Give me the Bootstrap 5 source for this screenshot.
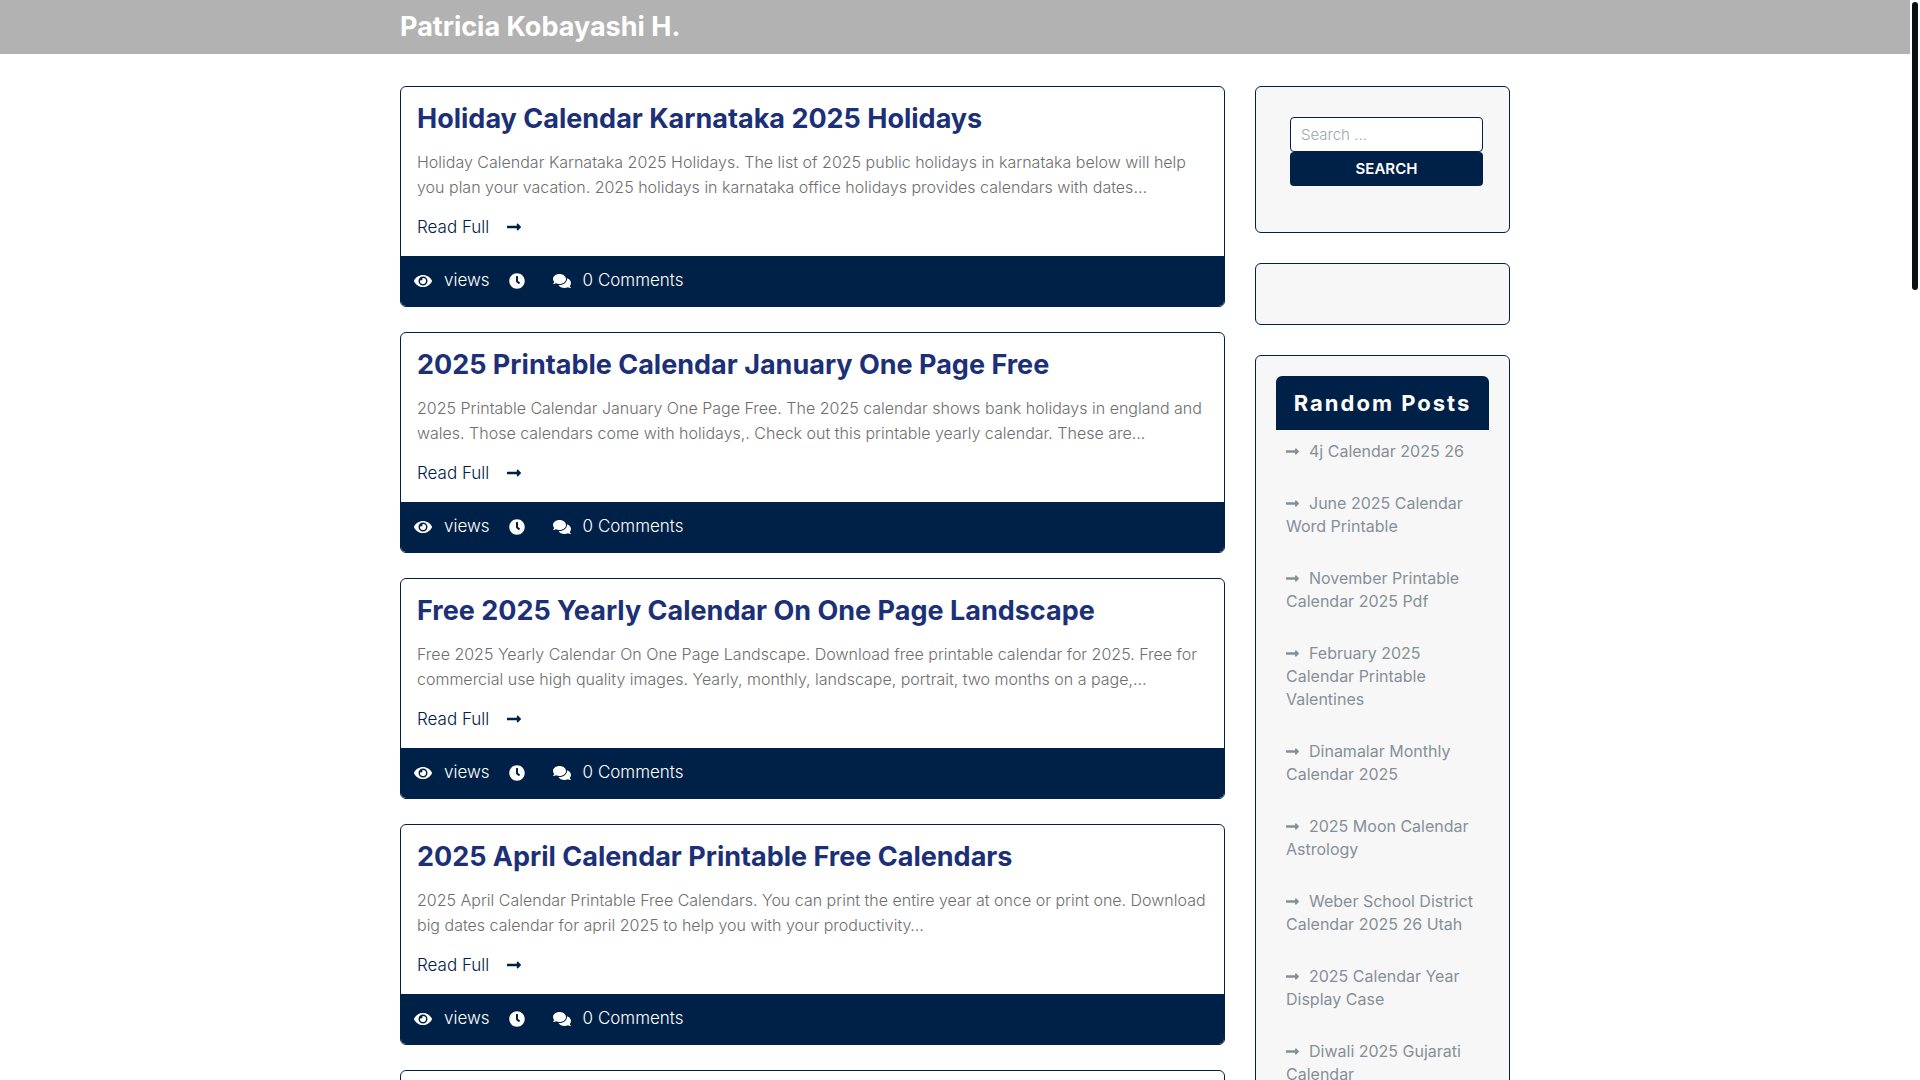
<!DOCTYPE html>
<html lang="en">
<head>
<meta charset="utf-8">
<meta name="viewport" content="width=device-width, initial-scale=1">
<title>Patricia Kobayashi H.</title>
<link href="https://cdn.jsdelivr.net/npm/bootstrap@5.3.0/dist/css/bootstrap.min.css" rel="stylesheet">
<style>
  :root { --navy: #002147; }
  body { font-family: Inter, "Open Sans", sans-serif; overflow: hidden; height: 100vh; padding-right: 10px; color: #6e6e6e; background: #fff; }
  .site-wrap { max-width: 1140px; --bs-gutter-x: 30px; }
  .site-wrap .row { --bs-gutter-x: 30px; }
  .site-head { background: #b2b2b2; }
  .site-title { font-size: 27px; line-height: 30px; font-weight: 700; padding: 12px 0; }
  .content-area { padding-top: 32px; }
  .post { border: 1px solid var(--navy); border-radius: 6px; margin-bottom: 25px; overflow: hidden; }
  .post-main { padding: 17px 16px 15px; }
  .post h2 { font-size: 27px; line-height: 30px; font-weight: 700; margin-bottom: 16px; }
  .post h2 a { color: #1c3078; }
  .post p { font-size: 16px; line-height: 25px; font-weight: 300; margin-bottom: 13px; }
  .read-full { color: var(--navy); font-size: 17px; line-height: 28px; font-weight: 300; gap: 18px; }
  .post-meta { background: var(--navy); color: #fff; font-size: 17px; font-weight: 300; height: 50px; padding: 0 13px 1px; gap: 19px; }
  .post-meta span { gap: 12px; }
  .post-meta .when { margin-right: 9px; }
  .ico { height: 16px; fill: currentColor; flex: none; }
  .side-box { border: 1px solid var(--navy); border-radius: 6px; background: #f7f7f7; margin-bottom: 30px; padding: 20px; }
  .search-form { padding: 10px 6px 26px 14px; }
  .search-form .form-control { border: 1px solid var(--navy); border-radius: 4px; height: 35px; padding: 0 10px; font-size: 15px; font-weight: 300; }
  .search-form .form-control::placeholder { color: #9aa8aa; }
  .search-form .btn { background: var(--navy); color: #fff; border: 0; border-radius: 4px; height: 34px; padding: 0; font-size: 15px; font-weight: 600; }
  .side-title { background: var(--navy); color: #fff; border-radius: 6px 6px 0 0; font-size: 22px; line-height: 24px; font-weight: 700; letter-spacing: 2px; padding: 15px 0; margin: 0; white-space: nowrap; }
  .side-list { padding: 10px; }
  .side-list li { margin-bottom: 29px; font-size: 16px; line-height: 23px; font-weight: 400; }
  .side-list a { color: #868f97; }
  .side-list .ico { height: 15px; margin-right: 10px; vertical-align: -2px; }
  .scroll-rail { width: 10px; background: #fff; padding: 2px; }
  .scroll-thumb { background: #0d1012; border-radius: 3px; height: 288px; }
</style>
<script src="https://cdn.jsdelivr.net/npm/bootstrap@5.3.0/dist/js/bootstrap.bundle.min.js"></script>
</head>
<body>
<svg class="d-none" aria-hidden="true">
  <symbol id="arrow" viewBox="0 0 448 512"><path d="M313.941 216H12c-6.627 0-12 5.373-12 12v56c0 6.627 5.373 12 12 12h301.941v46.059c0 21.382 25.851 32.09 40.971 16.971l86.059-86.059c9.373-9.373 9.373-24.569 0-33.941l-86.059-86.059c-15.119-15.119-40.971-4.411-40.971 16.971V216z"/></symbol>
  <symbol id="eye" viewBox="0 0 576 512"><path d="M572.52 241.4C518.29 135.59 410.93 64 288 64S57.68 135.64 3.48 241.41a32.35 32.35 0 0 0 0 29.19C57.71 376.41 165.07 448 288 448s230.32-71.64 284.52-177.41a32.35 32.35 0 0 0 0-29.19zM288 400a144 144 0 1 1 144-144 143.93 143.93 0 0 1-144 144zm0-240a95.31 95.31 0 0 0-25.31 3.79 47.85 47.85 0 0 1-66.9 66.9A95.78 95.78 0 1 0 288 160z"/></symbol>
  <symbol id="clock" viewBox="0 0 512 512"><path d="M256,8C119,8,8,119,8,256S119,504,256,504,504,393,504,256,393,8,256,8Zm92.49,313h0l-20,25a16,16,0,0,1-22.49,2.5h0l-67-49.72a40,40,0,0,1-15-31.23V112a16,16,0,0,1,16-16h32a16,16,0,0,1,16,16V256l58,42.5A16,16,0,0,1,348.49,321Z"/></symbol>
  <symbol id="comments" viewBox="0 0 576 512"><path d="M416 192c0-88.4-93.1-160-208-160S0 103.6 0 192c0 34.3 14.1 65.9 38 92-13.4 30.2-35.5 54.2-35.8 54.5-2.2 2.3-2.8 5.7-1.5 8.7S4.8 352 8 352c36.6 0 66.9-12.3 88.7-25 32.2 15.7 70.3 25 111.3 25 114.9 0 208-71.6 208-160zm122 220c23.9-26 38-57.7 38-92 0-66.9-53.5-124.2-129.3-148.1.9 6.6 1.3 13.3 1.3 20.1 0 105.9-107.7 192-240 192-10.8 0-21.3-.8-31.7-1.9C207.8 439.6 281.8 480 368 480c41 0 79.1-9.2 111.3-25 21.8 12.7 52.1 25 88.7 25 3.2 0 6.1-1.9 7.3-4.8 1.3-2.9.7-6.3-1.5-8.7-.3-.2-22.4-24.2-35.8-54.5z"/></symbol>
</svg>

<header class="site-head">
  <div class="container site-wrap">
    <a href="#" class="site-title d-block text-white text-decoration-none">Patricia Kobayashi H.</a>
  </div>
</header>

<div class="container site-wrap content-area">
  <div class="row">
    <main class="col-9">
      <article class="post">
        <div class="post-main">
          <h2><a href="#" class="text-decoration-none">Holiday Calendar Karnataka 2025 Holidays</a></h2>
          <p>Holiday Calendar Karnataka 2025 Holidays. The list of 2025 public holidays in karnataka below will help<br>you plan your vacation. 2025 holidays in karnataka office holidays provides calendars with dates…</p>
          <a href="#" class="read-full d-flex align-items-center text-decoration-none">Read Full <svg class="ico" width="14"><use href="#arrow"/></svg></a>
        </div>
        <div class="post-meta d-flex align-items-center">
          <span class="d-flex align-items-center"><svg class="ico" width="18"><use href="#eye"/></svg>views</span>
          <span class="when d-flex"><svg class="ico" width="16"><use href="#clock"/></svg></span>
          <span class="d-flex align-items-center"><svg class="ico" width="18"><use href="#comments"/></svg>0 Comments</span>
        </div>
      </article>
      <article class="post">
        <div class="post-main">
          <h2><a href="#" class="text-decoration-none">2025 Printable Calendar January One Page Free</a></h2>
          <p>2025 Printable Calendar January One Page Free. The 2025 calendar shows bank holidays in england and<br>wales. Those calendars come with holidays,. Check out this printable yearly calendar. These are…</p>
          <a href="#" class="read-full d-flex align-items-center text-decoration-none">Read Full <svg class="ico" width="14"><use href="#arrow"/></svg></a>
        </div>
        <div class="post-meta d-flex align-items-center">
          <span class="d-flex align-items-center"><svg class="ico" width="18"><use href="#eye"/></svg>views</span>
          <span class="when d-flex"><svg class="ico" width="16"><use href="#clock"/></svg></span>
          <span class="d-flex align-items-center"><svg class="ico" width="18"><use href="#comments"/></svg>0 Comments</span>
        </div>
      </article>
      <article class="post">
        <div class="post-main">
          <h2><a href="#" class="text-decoration-none">Free 2025 Yearly Calendar On One Page Landscape</a></h2>
          <p>Free 2025 Yearly Calendar On One Page Landscape. Download free printable calendar for 2025. Free for<br>commercial use high quality images. Yearly, monthly, landscape, portrait, two months on a page,…</p>
          <a href="#" class="read-full d-flex align-items-center text-decoration-none">Read Full <svg class="ico" width="14"><use href="#arrow"/></svg></a>
        </div>
        <div class="post-meta d-flex align-items-center">
          <span class="d-flex align-items-center"><svg class="ico" width="18"><use href="#eye"/></svg>views</span>
          <span class="when d-flex"><svg class="ico" width="16"><use href="#clock"/></svg></span>
          <span class="d-flex align-items-center"><svg class="ico" width="18"><use href="#comments"/></svg>0 Comments</span>
        </div>
      </article>
      <article class="post">
        <div class="post-main">
          <h2><a href="#" class="text-decoration-none">2025 April Calendar Printable Free Calendars</a></h2>
          <p>2025 April Calendar Printable Free Calendars. You can print the entire year at once or print one. Download<br>big dates calendar for april 2025 to help you with your productivity…</p>
          <a href="#" class="read-full d-flex align-items-center text-decoration-none">Read Full <svg class="ico" width="14"><use href="#arrow"/></svg></a>
        </div>
        <div class="post-meta d-flex align-items-center">
          <span class="d-flex align-items-center"><svg class="ico" width="18"><use href="#eye"/></svg>views</span>
          <span class="when d-flex"><svg class="ico" width="16"><use href="#clock"/></svg></span>
          <span class="d-flex align-items-center"><svg class="ico" width="18"><use href="#comments"/></svg>0 Comments</span>
        </div>
      </article>
      <article class="post"><div class="post-main"></div></article>
    </main>

    <aside class="col-3">
      <section class="side-box">
        <form class="search-form">
          <label class="visually-hidden" for="search">Search for:</label>
          <input id="search" type="search" class="form-control" placeholder="Search …">
          <button type="submit" class="btn w-100 d-block">SEARCH</button>
        </form>
      </section>
      <section class="side-box"><div class="pb-1 pt-3"></div></section>
      <section class="side-box">
        <h3 class="side-title text-center">Random Posts</h3>
        <ul class="side-list list-unstyled">
          <li><a href="#" class="text-decoration-none"><svg class="ico" width="13"><use href="#arrow"/></svg>4j Calendar 2025 26</a></li>
          <li><a href="#" class="text-decoration-none"><svg class="ico" width="13"><use href="#arrow"/></svg>June 2025 Calendar Word Printable</a></li>
          <li><a href="#" class="text-decoration-none"><svg class="ico" width="13"><use href="#arrow"/></svg>November Printable Calendar 2025 Pdf</a></li>
          <li><a href="#" class="text-decoration-none"><svg class="ico" width="13"><use href="#arrow"/></svg>February 2025 Calendar Printable Valentines</a></li>
          <li><a href="#" class="text-decoration-none"><svg class="ico" width="13"><use href="#arrow"/></svg>Dinamalar Monthly Calendar 2025</a></li>
          <li><a href="#" class="text-decoration-none"><svg class="ico" width="13"><use href="#arrow"/></svg>2025 Moon Calendar Astrology</a></li>
          <li><a href="#" class="text-decoration-none"><svg class="ico" width="13"><use href="#arrow"/></svg>Weber School District Calendar 2025 26 Utah</a></li>
          <li><a href="#" class="text-decoration-none"><svg class="ico" width="13"><use href="#arrow"/></svg>2025 Calendar Year Display Case</a></li>
          <li><a href="#" class="text-decoration-none"><svg class="ico" width="13"><use href="#arrow"/></svg>Diwali 2025 Gujarati Calendar</a></li>
        </ul>
      </section>
    </aside>
  </div>
</div>

<div class="scroll-rail position-fixed top-0 end-0 h-100" aria-hidden="true"><div class="scroll-thumb"></div></div>
</body>
</html>
